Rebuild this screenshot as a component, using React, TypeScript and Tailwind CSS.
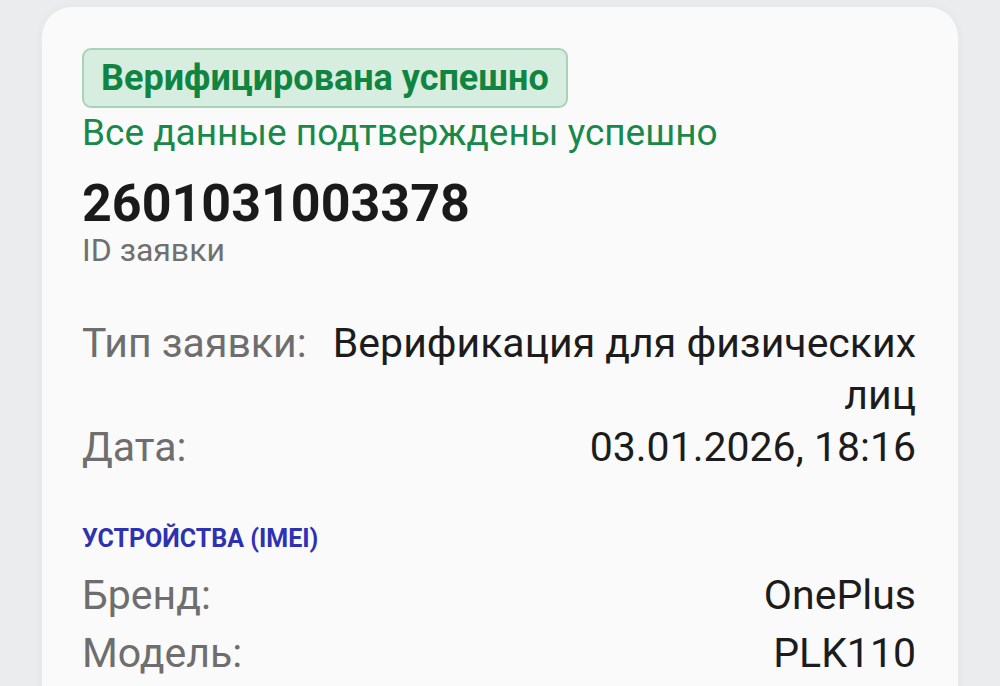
import React from 'react';

interface Row {
  label: string;
  value: string;
}

const mainRows: Row[] = [
  { label: 'Тип заявки:', value: 'Верификация для физических лиц' },
  { label: 'Дата:', value: '03.01.2026, 18:16' },
];

const deviceRows: Row[] = [
  { label: 'Бренд:', value: 'OnePlus' },
  { label: 'Модель:', value: 'PLK110' },
];

const InfoRow: React.FC<Row & { lead?: string }> = ({ label, value, lead = 'leading-[52px]' }) => (
  <div className={`flex items-start justify-between gap-[20px] text-[41px] ${lead}`}>
    <span className="shrink-0 text-[#6e6e6e]">{label}</span>
    <span className="text-right text-[#1c1c1c]">{value}</span>
  </div>
);

export default function App() {
  return (
    <div
      className="h-[686px] w-[1000px] overflow-hidden bg-[#eaeced] px-[42px] pt-[7px]"
      style={{ fontFamily: 'Roboto, "Noto Sans", sans-serif' }}
    >
      <div className="h-[720px] rounded-[30px] bg-[#fafafa] px-[42px] pt-[41px] pl-[40px] shadow-[0_0_12px_rgba(0,0,0,0.04)]">
        {/* Status badge */}
        <div className="inline-flex h-[60px] items-center rounded-[9px] border-2 border-[#a8d3b8] bg-[#d6ede0] px-[17px] text-[36px] font-bold text-[#0f8541]">
          Верифицирована успешно
        </div>
        <div className="mt-[4px] text-[37px] leading-[42px] text-[#18894b]">
          Все данные подтверждены успешно
        </div>

        {/* Request id */}
        <div className="mt-[21px] text-[52px] font-bold leading-[58px] text-[#1a1a1a]">2601031003378</div>
        <div className="text-[32px] leading-[34px] text-[#707070]">ID заявки</div>

        {/* Details */}
        <div className="mt-[50px]">
          {mainRows.map((r) => (
            <InfoRow key={r.label} {...r} />
          ))}
        </div>

        {/* Devices */}
        <div className="mt-[51px] text-[25px] font-bold uppercase leading-[30px] text-[#2f31b3]">
          Устройства (IMEI)
        </div>
        <div className="mt-[12px]">
          {deviceRows.map((r) => (
            <InfoRow key={r.label} {...r} lead="leading-[58px]" />
          ))}
        </div>
      </div>
    </div>
  );
}
